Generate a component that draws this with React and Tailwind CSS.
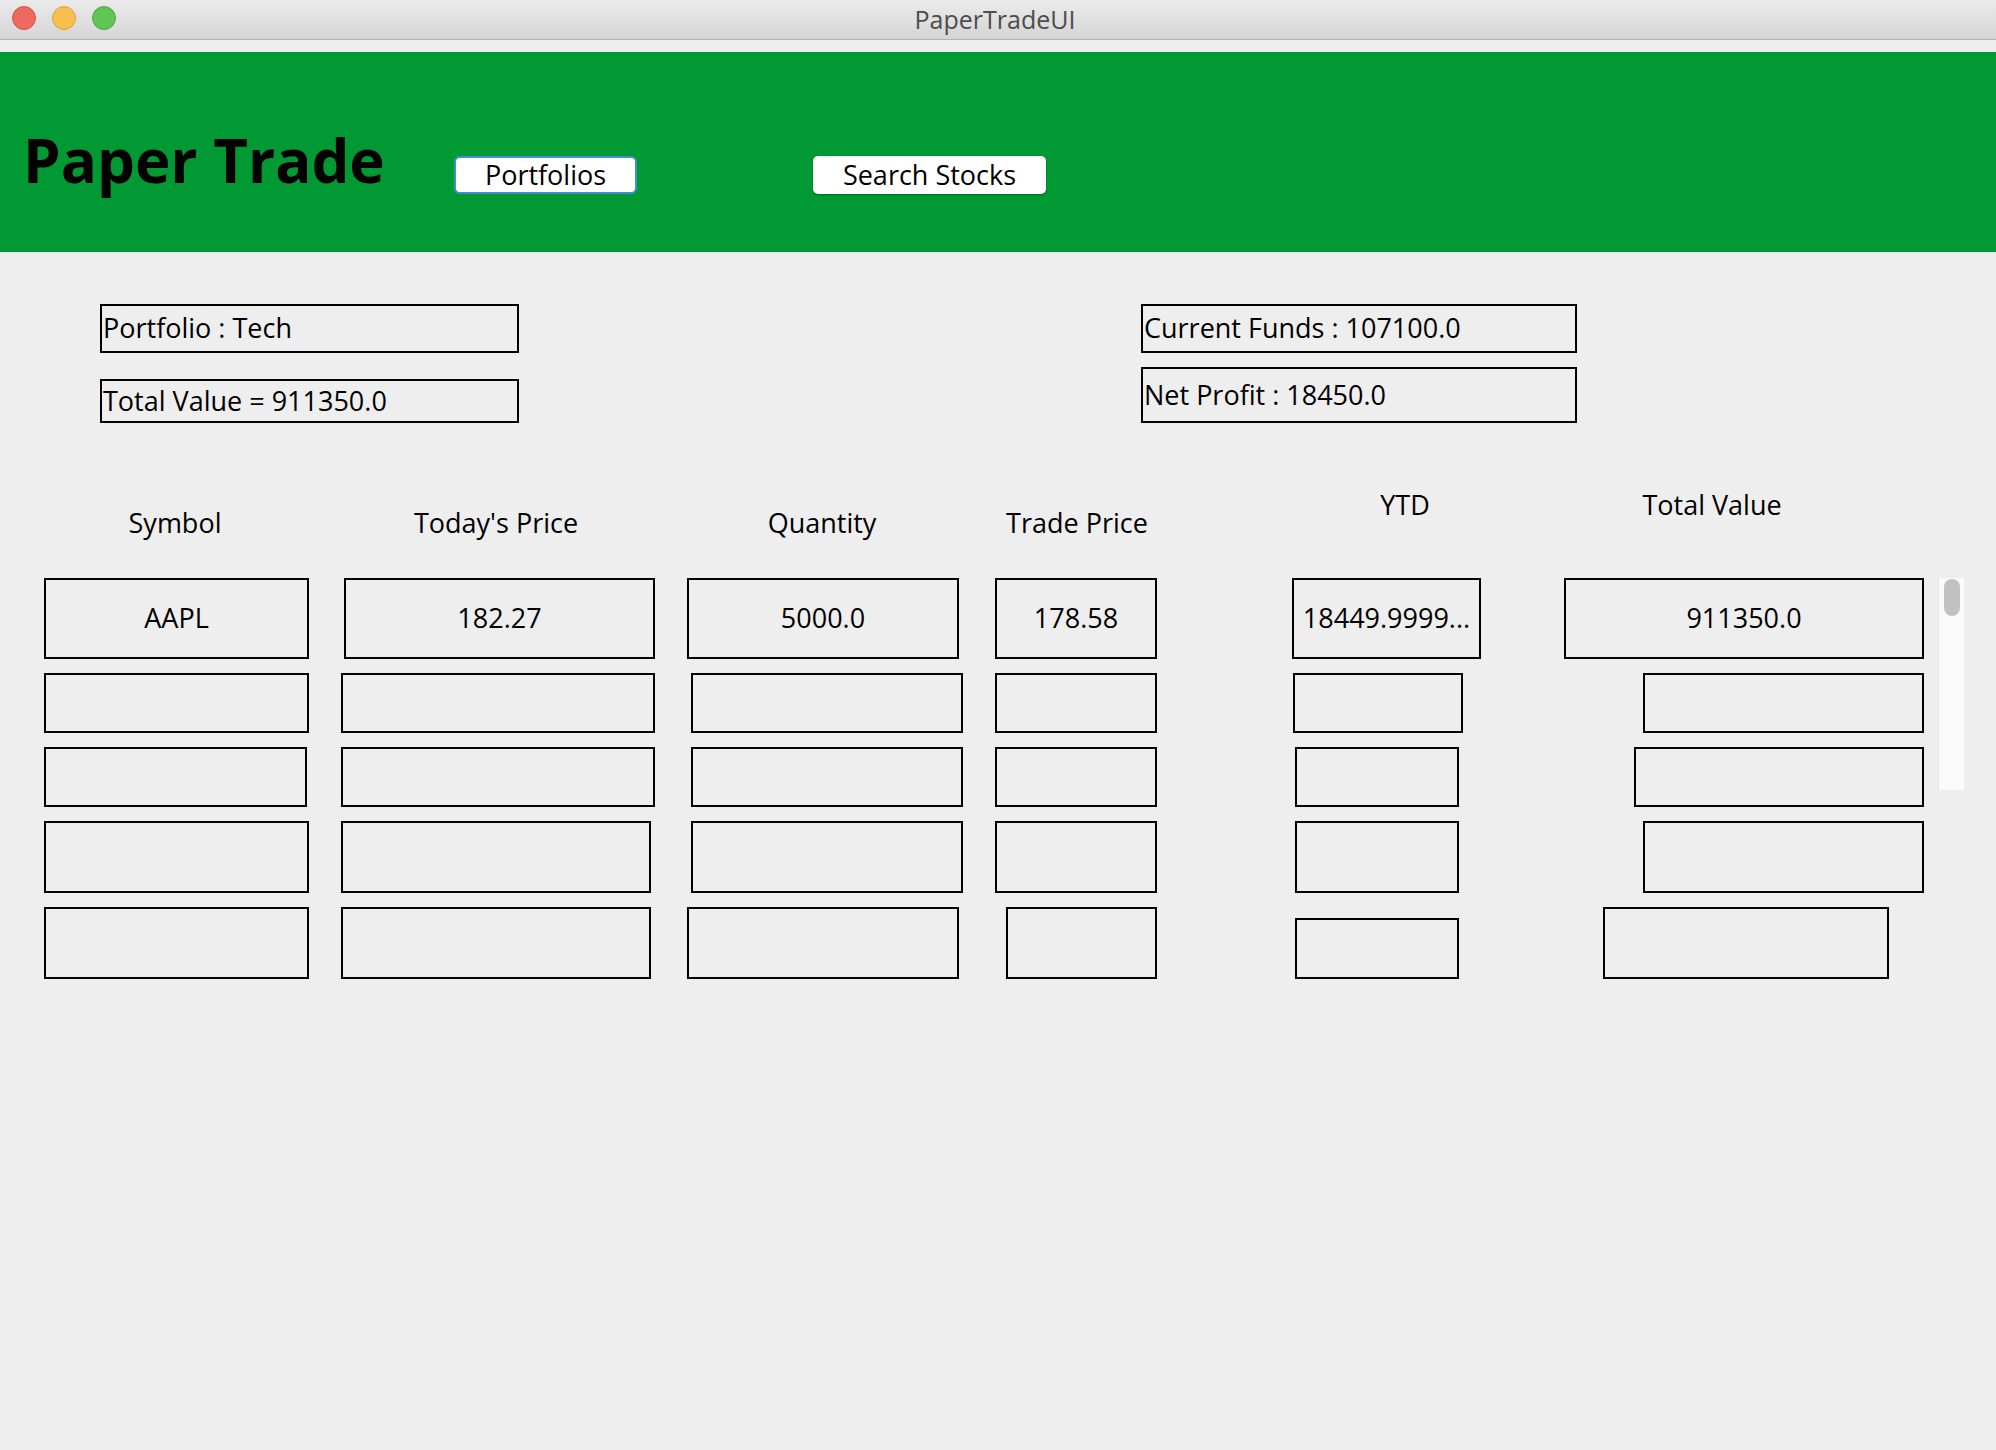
const font = { fontFamily: '"Open Sans", "Liberation Sans", sans-serif' };

const rows = [
  {
    h: 'h-[81px]',
    cells: [
      { w: 'w-[265px]', ml: 'ml-[44px]', text: 'AAPL' },
      { w: 'w-[311px]', ml: 'ml-[35px]', text: '182.27' },
      { w: 'w-[272px]', ml: 'ml-[32px]', text: '5000.0' },
      { w: 'w-[162px]', ml: 'ml-[36px]', text: '178.58' },
      { w: 'w-[189px]', ml: 'ml-[135px]', text: '18449.9999...' },
      { w: 'w-[360px]', ml: 'ml-[83px]', text: '911350.0' },
    ],
  },
  {
    h: 'h-[60px]',
    cells: [
      { w: 'w-[265px]', ml: 'ml-[44px]' },
      { w: 'w-[314px]', ml: 'ml-[32px]' },
      { w: 'w-[272px]', ml: 'ml-[36px]' },
      { w: 'w-[162px]', ml: 'ml-[32px]' },
      { w: 'w-[170px]', ml: 'ml-[136px]' },
      { w: 'w-[281px]', ml: 'ml-[180px]' },
    ],
  },
  {
    h: 'h-[60px]',
    cells: [
      { w: 'w-[263px]', ml: 'ml-[44px]' },
      { w: 'w-[314px]', ml: 'ml-[34px]' },
      { w: 'w-[272px]', ml: 'ml-[36px]' },
      { w: 'w-[162px]', ml: 'ml-[32px]' },
      { w: 'w-[164px]', ml: 'ml-[138px]' },
      { w: 'w-[290px]', ml: 'ml-[175px]' },
    ],
  },
  {
    h: 'h-[72px]',
    cells: [
      { w: 'w-[265px]', ml: 'ml-[44px]' },
      { w: 'w-[310px]', ml: 'ml-[32px]' },
      { w: 'w-[272px]', ml: 'ml-[40px]' },
      { w: 'w-[162px]', ml: 'ml-[32px]' },
      { w: 'w-[164px]', ml: 'ml-[138px]' },
      { w: 'w-[281px]', ml: 'ml-[184px]' },
    ],
  },
  {
    h: 'h-[72px]',
    cells: [
      { w: 'w-[265px]', ml: 'ml-[44px]' },
      { w: 'w-[310px]', ml: 'ml-[32px]' },
      { w: 'w-[272px]', ml: 'ml-[36px]' },
      { w: 'w-[151px]', ml: 'ml-[47px]' },
      { w: 'w-[164px]', ml: 'ml-[138px]', short: true },
      { w: 'w-[286px]', ml: 'ml-[144px]' },
    ],
  },
];

function InfoBox({ className, children }) {
  return (
    <div className={`flex items-center border-2 border-black pl-[1px] text-[27px] text-black ${className}`}>
      {children}
    </div>
  );
}

export default function App() {
  return (
    <div className="min-h-[1450px] w-[1996px] bg-[#eeeeee] overflow-hidden" style={font}>
      {/* Title bar */}
      <div className="relative flex h-[40px] items-center justify-center border-b border-[#b3b3b3] bg-gradient-to-b from-[#ebebeb] to-[#d5d5d5]">
        <div className="absolute left-[12px] top-[6px] flex gap-[16px]">
          <span className="h-[24px] w-[24px] rounded-full border border-[#d4544a] bg-[#ee6a5f]" />
          <span className="h-[24px] w-[24px] rounded-full border border-[#d9a43c] bg-[#f6bf50]" />
          <span className="h-[24px] w-[24px] rounded-full border border-[#4fa93f] bg-[#62c655]" />
        </div>
        <span className="ml-[-6px] text-[25px] leading-none text-[#4d4d4d]">PaperTradeUI</span>
      </div>

      {/* Green header */}
      <div className="mt-[12px] flex h-[200px] items-start bg-[#009933]">
        <h1 className="ml-[23px] mt-[78px] w-[431px] text-[60px] font-bold leading-none text-black">
          Paper Trade
        </h1>
        <button className="mt-[104px] flex h-[38px] w-[183px] items-center justify-center rounded-[6px] border-2 border-[#3f8fd2] bg-white text-[27px] text-black">
          Portfolios
        </button>
        <button className="ml-[176px] mt-[104px] flex h-[38px] w-[233px] items-center justify-center rounded-[5px] bg-white text-[27px] text-black shadow-[0_1px_2px_rgba(0,0,0,0.35)]">
          Search Stocks
        </button>
      </div>

      {/* Portfolio info */}
      <div className="flex items-start pt-[52px]">
        <div className="ml-[100px] flex w-[419px] flex-col gap-[26px]">
          <InfoBox className="h-[49px]">Portfolio : Tech</InfoBox>
          <InfoBox className="h-[44px]">Total Value = 911350.0</InfoBox>
        </div>
        <div className="ml-[622px] flex w-[436px] flex-col gap-[14px]">
          <InfoBox className="h-[49px]">Current Funds : 107100.0</InfoBox>
          <InfoBox className="h-[56px]">Net Profit : 18450.0</InfoBox>
        </div>
      </div>

      {/* Column headers */}
      <div className="flex items-start text-[27px] leading-[36px] text-black">
        <div className="ml-[75px] mt-[82px] w-[200px] text-center">Symbol</div>
        <div className="ml-[121px] mt-[82px] w-[200px] text-center">Today's Price</div>
        <div className="ml-[126px] mt-[82px] w-[200px] text-center">Quantity</div>
        <div className="ml-[55px] mt-[82px] w-[200px] text-center">Trade Price</div>
        <div className="ml-[128px] mt-[64px] w-[200px] text-center">YTD</div>
        <div className="ml-[107px] mt-[64px] w-[200px] text-center">Total Value</div>
      </div>

      {/* Holdings rows */}
      <div className="mt-[37px] flex items-start">
        <div className="flex w-[1924px] flex-col gap-[14px]">
          {rows.map((row, i) => (
            <div key={i} className={`flex items-stretch ${row.h}`}>
              {row.cells.map((c, j) => (
                <div
                  key={j}
                  className={`${c.w} ${c.ml} ${c.short ? 'mt-[11px]' : ''} flex shrink-0 items-center justify-center overflow-hidden whitespace-nowrap border-2 border-black text-[27px] text-black`}
                >
                  {c.text}
                </div>
              ))}
            </div>
          ))}
        </div>
        <div className="ml-[14px] h-[212px] w-[26px] border-l border-[#e6e6e6] bg-[#fafafa] pl-[5px] pt-[1px]">
          <div className="h-[37px] w-[16px] rounded-full bg-[#c1c1c1]" />
        </div>
      </div>
    </div>
  );
}
